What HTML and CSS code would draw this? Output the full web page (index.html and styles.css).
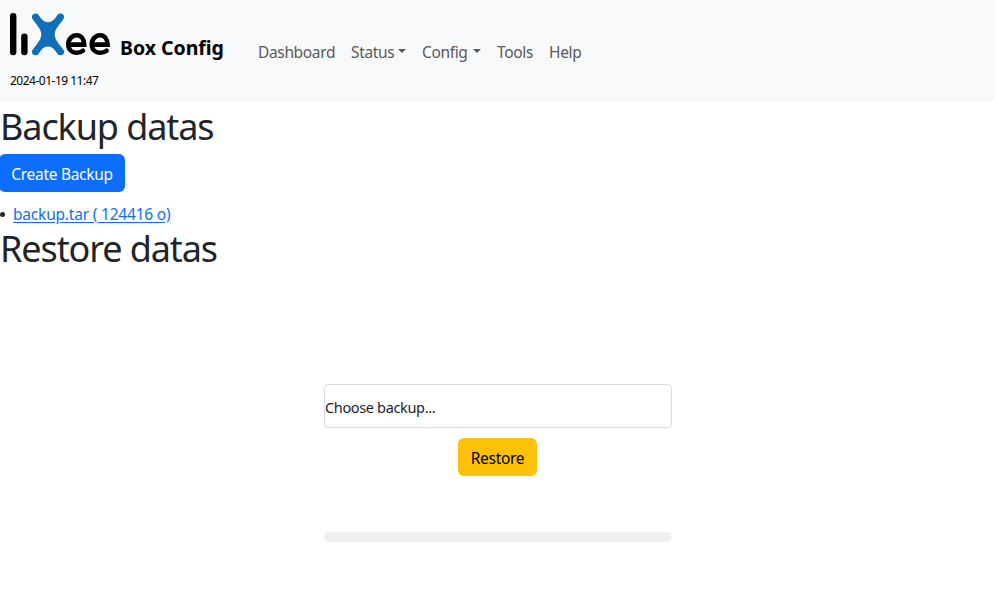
FILE: index.html
```html
<!DOCTYPE html>
<html lang="en">
<head>
<meta charset="utf-8">
<title>Box Config</title>
<link rel="stylesheet" href="styles.css">
</head>
<body>
<header class="navbar">
  <div class="brand">
    <div class="brand-row">
      <svg class="logo" viewBox="0 -.6 100 44" width="100" height="44" role="img" aria-label="LiXee">
        <g fill="none" stroke="#000" stroke-linecap="round">
          <path stroke-width="6.4" d="M3.2 3.6V39.4M14.4 24.2V39.4"/>
          <path stroke-width="4.6" d="M59.5 32H74.2C74 26.4 71 22.6 66.7 22.6C62 22.6 58.3 26.6 58.3 31.6C58.3 36.8 62 40.2 66.7 40.2C69.3 40.2 71.2 39.6 73 38.2"/>
          <path stroke-width="4.6" d="M83 32H97.6C97.4 26.4 94.4 22.6 90.2 22.6C85.5 22.6 81.8 26.6 81.8 31.6C81.8 36.8 85.5 40.2 90.2 40.2C92.8 40.2 94.8 39.6 96.6 38.2"/>
        </g>
        <path fill="#106fb8" d="M22.8 2C24.2.4 26.9.4 28.3 2C31.5 6.6 33.5 9.6 38 9.6S44.5 6.6 47.8 2C49.1.4 51.9.4 53.2 2C54.5 3.5 54.4 5 53.2 6.8C48.5 13 44.7 16.8 44.7 21.8S48.5 30.6 53.2 36.8C54.4 38.6 54.5 40.1 53.2 41.6C51.9 43 49.1 43 47.8 41.6C44.5 37 42.5 34 38 34S31.5 37 28.3 41.6C26.9 43 24.2 43 22.8 41.6C21.5 40.1 21.6 38.6 22.8 36.8C27.5 30.6 31.3 26.8 31.3 21.8S27.5 13 22.8 6.8C21.6 5 21.5 3.5 22.8 2Z"/>
      </svg>
      <strong class="brand-name">Box Config</strong>
    </div>
    <time class="clock">2024-01-19 11:47</time>
  </div>
  <nav class="menu">
    <a class="dashboard">Dashboard</a>
    <a class="status caret">Status</a>
    <a class="config caret">Config</a>
    <a class="tools">Tools</a>
    <a class="help">Help</a>
  </nav>
</header>
<main>
  <h1 class="title-backup">Backup datas</h1>
  <button class="btn primary"><span>Create Backup</span></button>
  <ul class="files"><li><a href="#">backup.tar ( 124416 o)</a></li></ul>
  <h1 class="title-restore">Restore datas</h1>
  <form class="restore">
    <label class="file-field"><span>Choose backup...</span></label>
    <button type="button" class="btn warning"><span>Restore</span></button>
    <div class="progress"></div>
  </form>
</main>
</body>
</html>
```
FILE: styles.css
```css
* { box-sizing: border-box; }
body {
  margin: 0;
  background: #fff;
  color: #212529;
  font: 15.5px/24px "Noto Sans", "Open Sans", sans-serif;
}
.navbar {
  display: flex;
  height: 102px;
  padding: 12px 0 0 10px;
  background: #f8f9fa;
  border-radius: 4px;
}
.brand { width: 248px; color: #000; }
.brand-row { display: flex; height: 57px; gap: 10px; }
.logo { flex: none; }
.brand-name {
  padding-top: 22px;
  font-size: 19.5px;
  line-height: 28px;
  letter-spacing: -.03px;
  white-space: nowrap;
}
.clock {
  display: block;
  font-size: 12px;
  line-height: 24px;
  letter-spacing: -.5px;
}
.menu {
  display: flex;
  gap: 16px;
  padding-top: 28px;
  color: #595a5b;
  letter-spacing: -.35px;
  white-space: nowrap;
}
.menu a { flex: none; }
.dashboard { width: 77px; }
.status { width: 55px; }
.config { width: 59px; }
.tools { width: 36px; }
.help { width: 33px; }
.caret { display: flex; justify-content: space-between; }
.caret::after {
  content: "";
  align-self: flex-start;
  margin-top: 9px;
  border: 4px solid transparent;
  border-top-color: currentColor;
  border-bottom: 0;
}
h1 {
  margin: 0;
  height: 48px;
  font-size: 36px;
  font-weight: 400;
  line-height: 46px;
  letter-spacing: -1.1px;
}
.title-backup { margin-top: 2px; margin-bottom: 2px; }
.btn {
  display: block;
  height: 38px;
  padding: 2px 0 0;
  border: 0;
  border-radius: 6px;
  font: inherit;
  letter-spacing: -.3px;
  text-align: center;
  white-space: nowrap;
}
.primary { width: 126px; margin-left: -1px; background: #0d6efd; color: #fff; }
.warning { width: 79px; margin: 10px 0 0 134px; background: #ffc107; color: #000; }
.files { margin: 10px 0 0; padding: 0; list-style: none; }
.files li { display: flex; align-items: center; gap: 8px; height: 24px; }
.files li::before { content: ""; width: 5px; height: 5px; border-radius: 50%; background: #212529; }
.files a { margin-top: -1px; color: #0d6efd; letter-spacing: -.2px; text-underline-offset: 2px; }
.restore { width: 348px; margin: 110px 0 0 324px; }
.file-field {
  display: flex;
  align-items: center;
  height: 44px;
  padding-top: 2px;
  border: 1px solid #ddd;
  border-radius: 4px;
  font-size: 14.5px;
  letter-spacing: -.35px;
}
.progress { height: 10px; margin-top: 56px; border-radius: 5px; background: #f0f0f0; }
```
